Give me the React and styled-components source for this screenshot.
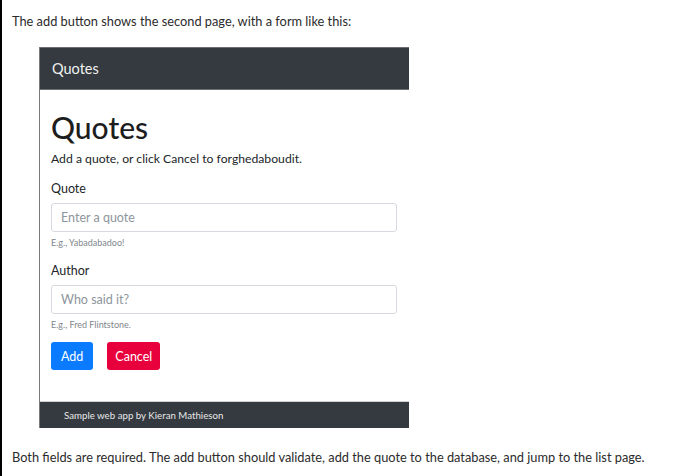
import styled, { createGlobalStyle } from "styled-components"

const GlobalStyle = createGlobalStyle`
  html, body {
    margin: 0;
    padding: 0;
    background: #fff;
  }
`

const Page = styled.div`
  min-height: 476px;
  border-left: 2px solid #000;
  box-sizing: border-box;
  padding-top: 12px;
  font-family: Lato, "Noto Sans", sans-serif;
  color: #333;
`

const Para = styled.p`
  margin: 0 0 0 10px;
  font-size: 12.8px;
  line-height: 18px;
  color: #2b2b2b;
`

const Figure = styled.div`
  margin: 17px 0 20px 37px;
  width: 369px;
  border-left: 1px solid #7a7a7a;
  font-family: Lato, "Noto Sans", sans-serif;
  color: #212529;
`

const NavBar = styled.div`
  height: 41px;
  background: #343a40;
  border-top: 1px solid #6c7075;
  border-bottom: 1px solid #6c7075;
  display: flex;
  align-items: center;
  padding-left: 12px;
  color: #f2f2f2;
  font-size: 14.5px;
`

const Main = styled.div`
  padding: 20px 11px 31px 11px;
`

const Title = styled.h1`
  margin: 0;
  font-size: 30px;
  font-weight: 500;
  line-height: 34px;
  color: #1d1d1d;
`

const Lead = styled.p`
  margin: 6px 0 0;
  font-size: 12.2px;
  line-height: 18px;
`

const Label = styled.div`
  margin-top: ${(p) => p.$top || 13}px;
  font-size: 12.5px;
  line-height: 18px;
`

const Input = styled.input`
  display: block;
  box-sizing: border-box;
  width: 346px;
  height: 29px;
  margin-top: 5px;
  padding: 0 9px;
  border: 1px solid #d6dae0;
  border-radius: 3px;
  font-family: inherit;
  font-size: 12.5px;
  color: #495057;
  &::placeholder {
    color: #8e959c;
  }
`

const Help = styled.div`
  margin-top: 4px;
  font-size: 9px;
  line-height: 13px;
  color: #7f868c;
`

const Buttons = styled.div`
  display: flex;
  gap: 14px;
  margin-top: 11px;
`

const Button = styled.button`
  height: 28px;
  padding: 0 ${(p) => p.$pad}px;
  border: none;
  border-radius: 3px;
  background: ${(p) => p.$bg};
  color: #fff;
  font-family: inherit;
  font-size: 12.5px;
`

const Footer = styled.div`
  height: 26px;
  background: #343a40;
  border-top: 1px solid #d0d3d6;
  display: flex;
  align-items: center;
  padding-left: 24px;
  color: #e8e8e8;
  font-size: 9.7px;
`

export default function App() {
  return (
    <>
      <GlobalStyle />
      <Page>
        <Para>The add button shows the second page, with a form like this:</Para>
        <Figure>
          <NavBar>Quotes</NavBar>
          <Main>
            <Title>Quotes</Title>
            <Lead>Add a quote, or click Cancel to forghedaboudit.</Lead>
            <Label $top={12}>Quote</Label>
            <Input placeholder="Enter a quote" />
            <Help>E.g., Yabadabadoo!</Help>
            <Label>Author</Label>
            <Input placeholder="Who said it?" />
            <Help>E.g., Fred Flintstone.</Help>
            <Buttons>
              <Button $bg="#0a7bff" $pad={10}>Add</Button>
              <Button $bg="#e8003d" $pad={8}>Cancel</Button>
            </Buttons>
          </Main>
          <Footer>Sample web app by Kieran Mathieson</Footer>
        </Figure>
        <Para>
          Both fields are required. The add button should validate, add the quote to the database, and jump to the list page.
        </Para>
      </Page>
    </>
  )
}
